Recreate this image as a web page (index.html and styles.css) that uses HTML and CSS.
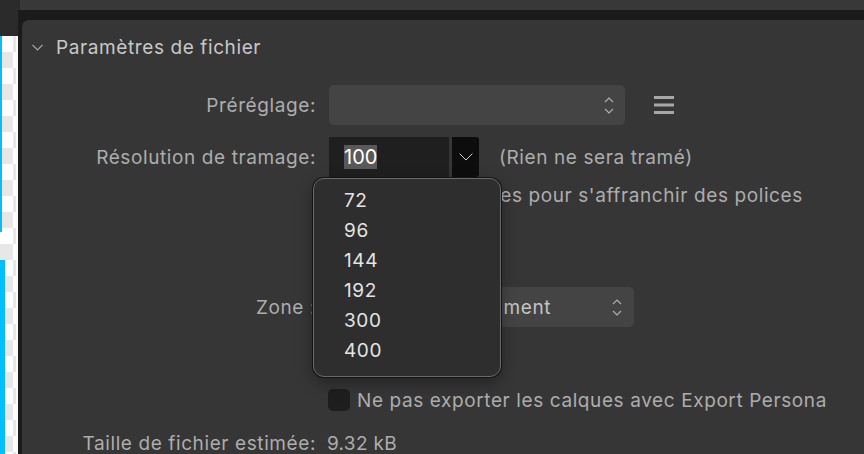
FILE: index.html
```html
<!DOCTYPE html>
<html lang="fr">
<head>
    <meta charset="UTF-8">
    <title>Paramètres de fichier</title>
    <link rel="stylesheet" href="styles.css">
</head>
<body>
    <div class="topbar"></div>
    <div class="main">
        <div class="canvas"></div>
        <div class="frame">
            <section class="panel">
                <div class="section-header">
                    <svg class="disclosure" width="11" height="7" viewBox="0 0 11 7"><path d="M0.5 0.8 L5.5 6 L10.5 0.8" fill="none" stroke="#a9a9a9" stroke-width="1.2"/></svg>
                    <span>Paramètres de fichier</span>
                </div>

                <div class="row row-preset">
                    <span class="label">Préréglage:</span>
                    <div class="select select-preset">
                        <svg class="updown" width="10" height="17" viewBox="0 0 10 17"><path d="M1 5 L5 1 L9 5 M1 12 L5 16 L9 12" fill="none" stroke="#b0b0b0" stroke-width="1.1"/></svg>
                    </div>
                    <svg class="menu-icon" width="20" height="18" viewBox="0 0 20 18"><rect x="0" y="0" width="20" height="3" fill="#a7a7a7"/><rect x="0" y="7.5" width="20" height="3" fill="#a7a7a7"/><rect x="0" y="15" width="20" height="3" fill="#a7a7a7"/></svg>
                </div>

                <div class="row row-res">
                    <span class="label">Résolution de tramage:</span>
                    <div class="combo">
                        <div class="combo-input"><span class="selected">100</span></div>
                        <div class="combo-btn">
                            <svg width="14" height="8" viewBox="0 0 14 8"><path d="M0.6 0.6 L7 7 L13.4 0.6" fill="none" stroke="#cfcfcf" stroke-width="1"/></svg>
                        </div>
                        <ul class="popup">
                            <li>72</li>
                            <li>96</li>
                            <li>144</li>
                            <li>192</li>
                            <li>300</li>
                            <li>400</li>
                        </ul>
                    </div>
                    <span class="note">(Rien ne sera tramé)</span>
                </div>

                <div class="row row-curves">
                    <span class="label"></span>
                    <span class="checkbox"></span>
                    <span class="check-text">Texte en courbes pour s'affranchir des polices</span>
                </div>

                <div class="row row-zone">
                    <span class="label">Zone :</span>
                    <div class="select select-zone">
                        <span class="value">Planche du document</span>
                        <svg class="updown" width="10" height="17" viewBox="0 0 10 17"><path d="M1 5 L5 1 L9 5 M1 12 L5 16 L9 12" fill="none" stroke="#b0b0b0" stroke-width="1.1"/></svg>
                    </div>
                </div>

                <div class="row row-layers">
                    <span class="label"></span>
                    <span class="checkbox"></span>
                    <span class="check-text">Ne pas exporter les calques avec Export Persona</span>
                </div>

                <div class="row row-size">
                    <span class="label">Taille de fichier estimée:</span>
                    <span class="size-value">9.32 kB</span>
                </div>
            </section>
        </div>
    </div>
</body>
</html>
```
FILE: styles.css
```css
body {
    margin: 0;
    width: 864px;
    height: 454px;
    overflow: hidden;
    background-color: #2b2b2b;
    font-family: 'Inter', 'Noto Sans', sans-serif;
    font-size: 19px;
    letter-spacing: 0.6px;
    color: #adadad;
}

.topbar {
    height: 10px;
    margin-left: 20px;
    background: #383838;
}

.main {
    display: flex;
    height: 444px;
}

.canvas {
    width: 16px;
    margin-top: 26px;
    border-right: 2px solid #fafafa;
    background:
        linear-gradient(#00bfff, #00bfff) 0 0 / 2px 196px no-repeat,
        linear-gradient(#00bfff, #00bfff) 0 224px / 5px 100% no-repeat,
        repeating-conic-gradient(#e7e7e7 0 25%, #ffffff 0 50%) -3px 0 / 32px 32px;
}

.frame {
    flex: 1;
    background: #1b1b1b;
    padding: 10px 0 0 4px;
}

.panel {
    height: 100%;
    background: #363636;
    border-top-left-radius: 7px;
}

/* header */
.section-header {
    display: flex;
    align-items: center;
    height: 34px;
    padding: 10px 0 0 10px;
    color: #c8c8c8;
}

.section-header .disclosure {
    margin-right: 13px;
}

/* rows */
.row {
    display: flex;
    align-items: center;
}

.label {
    width: 294px;
    margin-right: 13px;
    text-align: right;
    flex-shrink: 0;
    white-space: nowrap;
}

.row-preset {
    height: 40px;
    margin-top: 21px;
}

.row-res {
    height: 40px;
    margin-top: 12px;
}

.row-curves {
    height: 22px;
    margin-top: 7px;
}

.row-zone {
    height: 40px;
    margin-top: 81px;
}

.row-layers {
    height: 22px;
    margin-top: 62px;
}

.row-size {
    height: 22px;
    margin-top: 21px;
}

/* selects */
.select {
    display: flex;
    align-items: center;
    justify-content: space-between;
    height: 40px;
    box-sizing: border-box;
    padding: 0 11px 0 15px;
    background: #444444;
    border-radius: 5px;
}

.select-preset {
    width: 296px;
    justify-content: flex-end;
}

.select-zone {
    width: 305px;
    padding-right: 12px;
    color: #c4c4c4;
}

.menu-icon {
    margin-left: 29px;
}

/* combo box */
.combo {
    position: relative;
    display: flex;
    height: 40px;
}

.combo-input {
    display: flex;
    align-items: center;
    width: 120px;
    padding-left: 15px;
    box-sizing: border-box;
    background: #1f1f1f;
    font-size: 20px;
    letter-spacing: 0;
}

.selected {
    background: #595959;
    color: #ffffff;
    line-height: 24px;
}

.combo-btn {
    display: flex;
    align-items: center;
    justify-content: center;
    width: 27px;
    margin-left: 3px;
    background: #0d0d0d;
    border-radius: 0 3px 3px 0;
}

.note {
    margin-left: 20px;
}

.popup {
    position: absolute;
    left: -16px;
    top: 41px;
    width: 188px;
    height: 199px;
    box-sizing: border-box;
    margin: 0;
    padding: 7px 0 0 30px;
    list-style: none;
    background: #2e2e2e;
    border: 1px solid #6a6a6a;
    border-radius: 11px;
    box-shadow: 0 0 0 1px #141414, 0 6px 16px rgba(0, 0, 0, 0.35);
    color: #e4e4e4;
    z-index: 2;
}

.popup li {
    height: 30px;
    line-height: 30px;
}

/* checkboxes */
.checkbox {
    width: 22px;
    height: 22px;
    margin-left: -1px;
    margin-right: 7px;
    background: #1e1e1e;
    border-radius: 5px;
    flex-shrink: 0;
}

.check-text {
    white-space: nowrap;
}

.size-value {
    margin-left: -2px;
    letter-spacing: 0.3px;
}
```
